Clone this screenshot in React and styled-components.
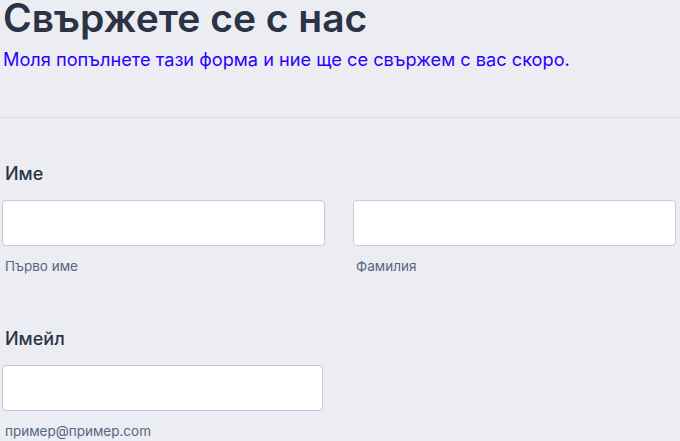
import styled, { createGlobalStyle } from 'styled-components';

const GlobalStyle = createGlobalStyle`
  html, body {
    margin: 0;
    padding: 0;
    background: #ecedf3;
    font-family: Inter, "Noto Sans", sans-serif;
    color: #2c3345;
  }
`;

const Page = styled.div`
  padding: 0 4px 0 2px;
`;

const Header = styled.header`
  padding: 0 0 46px 3px;
  border-bottom: 1px solid #d8dae2;
  margin: 0 -4px 0 -2px;
`;

const Title = styled.h1`
  margin: 0;
  font-size: 39px;
  line-height: 36px;
  font-weight: 600;
  color: #2c3345;
  white-space: nowrap;
`;

const Subtitle = styled.p`
  margin: 11px 0 0;
  font-size: 18.2px;
  line-height: 24px;
  font-weight: 400;
  color: #2b00ff;
`;

const Field = styled.section`
  margin-top: ${props => props.top}px;
`;

const Label = styled.div`
  font-size: 18px;
  line-height: 24px;
  font-weight: 500;
  padding-left: 3px;
  margin-bottom: 14px;
`;

const Row = styled.div`
  display: grid;
  grid-template-columns: 1fr 1fr;
  column-gap: 28px;
`;

const Col = styled.div`
  display: flex;
  flex-direction: column;
  padding-right: ${props => props.trim || 0}px;
`;

const Input = styled.input`
  box-sizing: border-box;
  height: 46px;
  width: 100%;
  background: #fff;
  border: 1px solid #c3cad8;
  border-radius: 4px;
  font: inherit;
  padding: 0 10px;
`;

const Hint = styled.span`
  margin-top: 11px;
  font-size: 13.5px;
  line-height: 18px;
  color: #57647e;
  padding-left: 3px;
`;

export default function App() {
  return (
    <>
      <GlobalStyle />
      <Page>
        <Header>
          <Title>Свържете се с нас</Title>
          <Subtitle>Моля попълнете тази форма и ние ще се свържем с вас скоро.</Subtitle>
        </Header>
        <Field top={44}>
          <Label>Име</Label>
          <Row>
            <Col>
              <Input type="text" />
              <Hint>Първо име</Hint>
            </Col>
            <Col>
              <Input type="text" />
              <Hint>Фамилия</Hint>
            </Col>
          </Row>
        </Field>
        <Field top={52}>
          <Label>Имейл</Label>
          <Row>
            <Col trim={2}>
              <Input type="email" />
              <Hint>пример@пример.com</Hint>
            </Col>
          </Row>
        </Field>
      </Page>
    </>
  );
}
